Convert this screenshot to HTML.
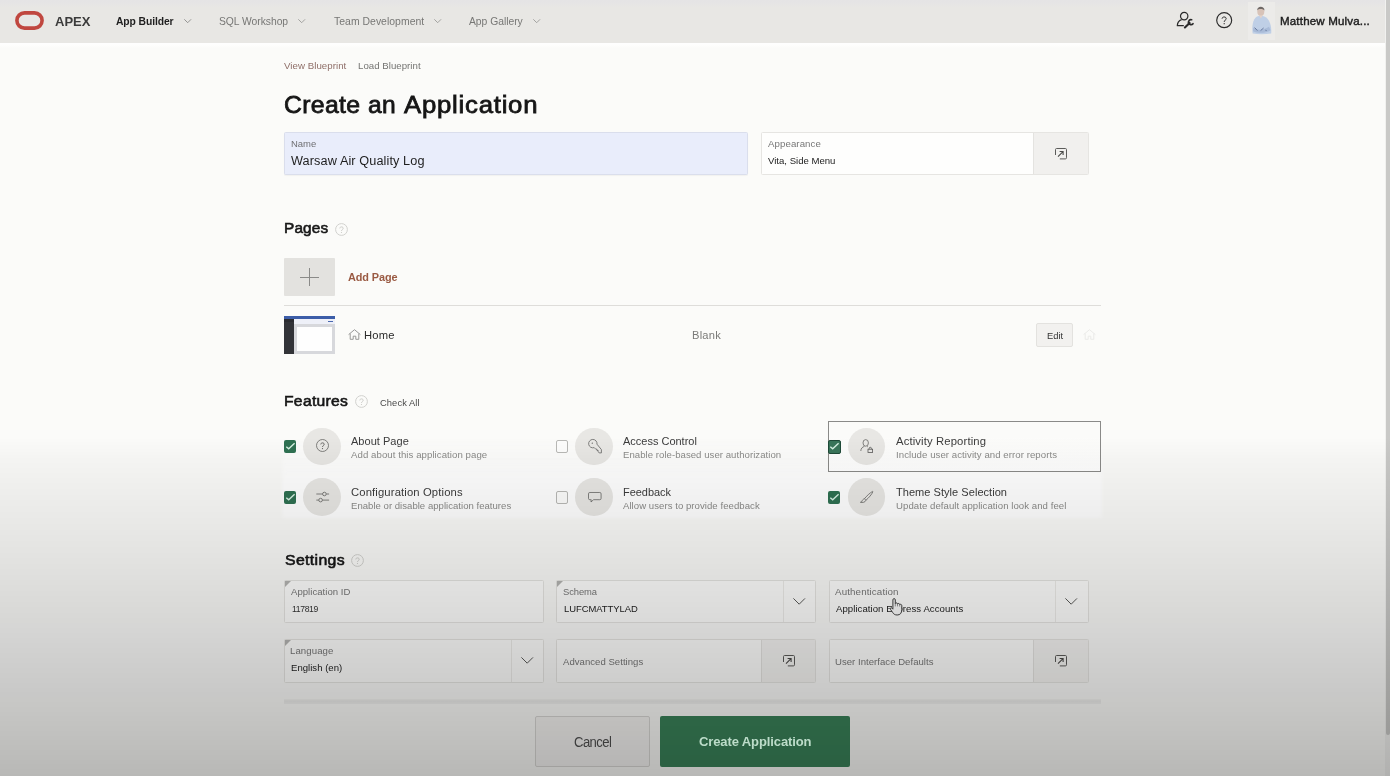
<!DOCTYPE html>
<html lang="en">
<head>
<meta charset="utf-8">
<title>Create an Application</title>
<style>
*{box-sizing:border-box;margin:0;padding:0}
html,body{width:1390px;height:776px;overflow:hidden;background:#fbfbf9;font-family:"Liberation Sans",Arial,sans-serif}
#root{position:relative;width:1390px;height:776px;overflow:hidden;background:#fbfbf9}
.a{position:absolute}
.t{position:absolute;white-space:pre;line-height:1;display:block;transform-origin:0 0}
#hdr{left:0;top:0;width:1390px;height:42.5px;background:#e8e7e4}
#hdrtop{left:0;top:0;width:1390px;height:7px;background:linear-gradient(#e5e4e5 0,#e6e5e5 55%,#e8e7e4 100%)}
#hdrbot{left:0;top:42.5px;width:1390px;height:5px;background:linear-gradient(#fefefe 0,#fefefd 40%,#fbfbf9 100%)}
.fld{background:#fefefd;border:1px solid #e6e5e2;border-radius:1.5px}
.btnpart{background:#f1f0ee;border-left:1px solid #e4e3e0}
.btnpart.lo{background:#f5f4f2}
.circ{width:37.6px;height:37.8px;border-radius:50%;background:#e8e7e4}
.cb{width:12.3px;height:12.6px;border-radius:2px}
.cb.on{background:#2f7152}
.cb.off{background:#fdfdfc;border:1px solid #b9b9b6}
.tri{width:0;height:0;border-top:6px solid #b4b4b2;border-right:6px solid transparent}
svg{position:absolute;overflow:visible}
#ov{left:0;top:0;width:1390px;height:776px;pointer-events:none;
background:linear-gradient(to bottom,rgba(0,0,0,0) 0px,rgba(0,0,0,0) 437px,rgba(0,0,0,0.027) 460px,rgba(0,0,0,0.044) 480px,rgba(0,0,0,0.092) 550px,rgba(0,0,0,0.1335) 610px,rgba(0,0,0,0.197) 690px,rgba(0,0,0,0.253) 762px,rgba(0,0,0,0.265) 776px)}
#halo{left:282px;top:437px;width:820px;height:81px;background:linear-gradient(to bottom,rgba(255,255,255,0) 0,rgba(255,255,255,1) 45px,rgba(255,255,255,1) 100%);filter:blur(2px)}
</style>
</head>
<body>
<div id="root">
<!-- header -->
<div class="a" id="hdr"></div>
<div class="a" id="hdrtop"></div>
<div class="a" id="hdrbot"></div>
<svg style="left:15px;top:11px" width="29" height="19" viewBox="0 0 29 19"><rect x="1.9" y="1.9" width="25.2" height="15.2" rx="7.6" fill="none" stroke="#c0473f" stroke-width="3.6"/></svg>
<!-- chevrons -->
<svg style="left:184.3px;top:19.2px" width="7.4" height="4.2" viewBox="0 0 7.4 4.2"><polyline points="0.3,0.3 3.7,3.7 7.1,0.3" fill="none" stroke="#8a8a88" stroke-width="0.9"/></svg>
<svg style="left:298.4px;top:19.2px" width="7.4" height="4.2" viewBox="0 0 7.4 4.2"><polyline points="0.3,0.3 3.7,3.7 7.1,0.3" fill="none" stroke="#9a9a98" stroke-width="0.9"/></svg>
<svg style="left:433.9px;top:19.2px" width="7.4" height="4.2" viewBox="0 0 7.4 4.2"><polyline points="0.3,0.3 3.7,3.7 7.1,0.3" fill="none" stroke="#9a9a98" stroke-width="0.9"/></svg>
<svg style="left:533px;top:19.2px" width="7.4" height="4.2" viewBox="0 0 7.4 4.2"><polyline points="0.3,0.3 3.7,3.7 7.1,0.3" fill="none" stroke="#9a9a98" stroke-width="0.9"/></svg>
<!-- admin icon -->
<svg style="left:1176px;top:11px" width="18" height="18" viewBox="0 0 18 18">
<circle cx="8.2" cy="5.1" r="3.7" fill="none" stroke="#2a2a2a" stroke-width="1.2"/>
<path d="M5.6 8.6 C2.8 9.6 1.4 12 1.3 14.7 H7.8" fill="none" stroke="#2a2a2a" stroke-width="1.2" stroke-linejoin="round"/>
<path d="M8.9 16.5 L13.6 11.9" fill="none" stroke="#2a2a2a" stroke-width="2.1" stroke-linecap="round"/>
<path d="M15.3 8.6 A2.5 2.5 0 1 0 17.2 12.3" fill="none" stroke="#2a2a2a" stroke-width="1.7" stroke-linecap="round" transform="rotate(8 14.6 11)"/>
</svg>
<!-- help icon -->
<svg style="left:1215.5px;top:11.8px" width="16.4" height="16.4" viewBox="0 0 16.4 16.4"><circle cx="8.2" cy="8.2" r="7.5" fill="none" stroke="#2c2c2c" stroke-width="1.15"/>
<path d="M6.1 6.7 C6.1 4.4 10.2 4.4 10.2 6.6 C10.2 8.2 8.2 8.1 8.2 9.9" fill="none" stroke="#2c2c2c" stroke-width="1.0"/><circle cx="8.2" cy="11.7" r="0.65" fill="#2c2c2c"/></svg>
<!-- avatar -->
<svg style="left:1248px;top:2px" width="27" height="38" viewBox="0 0 27 38">
<rect x="0" y="0" width="27" height="38" fill="#ecebe9"/>
<path d="M4.6 31.4 C3.8 25 4.6 17 9 14.6 L12.6 13.4 L16.4 14.4 C21.6 16.4 23.8 24 23.2 31.4 C17 32.4 10 32.4 4.6 31.4 Z" fill="#bfcfe6"/>
<path d="M5.2 25.4 C9 28.4 15 28.6 21 24.8 L22.6 28.2 C17 31.6 10 31.4 5 29.2 Z" fill="#a9bbd8"/>
<path d="M6.6 25.6 L9.4 28.6 M12.6 28.6 L15.6 26 M17.4 28.2 L18.6 28.6" stroke="#5f6f95" stroke-width="0.9" fill="none"/>
<ellipse cx="12.8" cy="9.6" rx="3.5" ry="4.4" fill="#d8c3b8"/>
<path d="M9.2 8.4 C9 3.6 16.6 3.6 16.5 8.6 C15.6 6.6 10.4 6.4 9.2 8.4Z" fill="#6f6966"/>
<path d="M11.2 13.6 L12.9 16.6 L14.6 13.6Z" fill="#e3d2c8"/>
</svg>
<!-- name field -->
<div class="a" style="left:284px;top:132px;width:463.5px;height:43px;background:#e9edfb;border:1px solid #dadeec;border-radius:1.5px;box-shadow:0 1px 1px rgba(0,0,0,0.04)"></div>
<!-- appearance field -->
<div class="a fld" style="left:761px;top:132px;width:327.5px;height:43px"></div>
<div class="a btnpart" style="left:1033px;top:133px;width:54.5px;height:41px"></div>
<svg class="pop" style="left:1055px;top:148px" width="12" height="11.4" viewBox="0 0 12 11.4"><path d="M0.5 7 V1.6 Q0.5 0.5 1.6 0.5 H10.4 Q11.5 0.5 11.5 1.6 V9.8 Q11.5 10.9 10.4 10.9 H4.8" fill="none" stroke="#5a5a58" stroke-width="1"/><path d="M3 8.6 L8 3.6 M4.6 3.5 H8.1 V7" fill="none" stroke="#4a4a48" stroke-width="1.1"/></svg>
<!-- pages -->
<svg style="left:334.8px;top:222.8px" width="13" height="13" viewBox="0 0 13 13"><circle cx="6.5" cy="6.5" r="5.9" fill="none" stroke="#d2d2cf" stroke-width="1"/><path d="M4.8 5.4 C4.8 3.4 8.2 3.4 8.2 5.3 C8.2 6.6 6.5 6.5 6.5 8" fill="none" stroke="#c8c8c5" stroke-width="0.9"/><circle cx="6.5" cy="9.5" r="0.6" fill="#c8c8c5"/></svg>
<div class="a" style="left:284px;top:258px;width:51px;height:38px;background:#e3e2df;border-radius:1px"></div>
<div class="a" style="left:300.4px;top:276.7px;width:18.6px;height:1px;background:#8a8a88"></div>
<div class="a" style="left:309.2px;top:267.9px;width:1px;height:18.6px;background:#8a8a88"></div>
<div class="a" style="left:284px;top:305px;width:816.5px;height:1px;background:#deddda"></div>
<!-- thumbnail -->
<div class="a" style="left:284px;top:316px;width:51px;height:37.5px;background:#d7d8dc"></div>
<div class="a" style="left:284px;top:316px;width:51px;height:2.5px;background:#3c5da8"></div>
<div class="a" style="left:284px;top:318.5px;width:10px;height:35px;background:#323338"></div>
<div class="a" style="left:284px;top:318.5px;width:10px;height:3.5px;background:#2a2b30"></div>
<div class="a" style="left:294px;top:318.5px;width:41px;height:5.5px;background:#eef0f8"></div>
<div class="a" style="left:328.4px;top:321.2px;width:4.6px;height:1.2px;background:#4a68b0"></div>
<div class="a" style="left:296.8px;top:326.8px;width:35.6px;height:24px;background:#fefefe"></div>
<!-- home icon -->
<svg style="left:347.6px;top:329px" width="13" height="11" viewBox="0 0 13 11"><path d="M0.6 5.6 L6.5 0.7 L12.4 5.6 M2.2 4.6 V10.3 H5.2 V7.2 H7.8 V10.3 H10.8 V4.6" fill="none" stroke="#8f8f8d" stroke-width="0.9" stroke-linejoin="round"/></svg>
<!-- edit button -->
<div class="a" style="left:1036.4px;top:323.2px;width:36.2px;height:23.5px;background:#f2f1ef;border:1px solid #e3e2df;border-radius:2px"></div>
<svg style="left:1082.5px;top:329px" width="13" height="11" viewBox="0 0 13 11"><path d="M0.6 5.6 L6.5 0.7 L12.4 5.6 M2.2 4.6 V10.3 H5.2 V7.2 H7.8 V10.3 H10.8 V4.6" fill="none" stroke="#e9e9e6" stroke-width="0.9" stroke-linejoin="round"/></svg>
<!-- features help -->
<svg style="left:354.9px;top:394.6px" width="13" height="13" viewBox="0 0 13 13"><circle cx="6.5" cy="6.5" r="5.9" fill="none" stroke="#d2d2cf" stroke-width="1"/><path d="M4.8 5.4 C4.8 3.4 8.2 3.4 8.2 5.3 C8.2 6.6 6.5 6.5 6.5 8" fill="none" stroke="#c8c8c5" stroke-width="0.9"/><circle cx="6.5" cy="9.5" r="0.6" fill="#c8c8c5"/></svg>
<div class="a" id="halo"></div>
<!-- focus box -->
<div class="a" style="left:828px;top:421px;width:273px;height:50.5px;border:1px solid #8a8a88;background:linear-gradient(#fbfbf9 0,#fbfbf9 30%,#ffffff 100%)"></div>
<!-- circles -->
<div class="a circ" style="left:303.2px;top:427.6px"></div>
<div class="a circ" style="left:575.4px;top:427.6px"></div>
<div class="a circ" style="left:847.7px;top:427.6px"></div>
<div class="a circ" style="left:303.2px;top:477.8px"></div>
<div class="a circ" style="left:575.4px;top:477.8px"></div>
<div class="a circ" style="left:847.7px;top:477.8px"></div>
<!-- checkboxes -->
<div class="a cb on" style="left:284.1px;top:440.2px"></div>
<div class="a cb off" style="left:556.2px;top:440.2px"></div>
<div class="a cb on" style="left:828px;top:439.7px;width:13px;height:14px;background:#39755a;border:1.2px solid #1f4a38"></div>
<div class="a cb on" style="left:284.1px;top:491.2px"></div>
<div class="a cb off" style="left:556.2px;top:491.2px"></div>
<div class="a cb on" style="left:828.2px;top:491.2px"></div>
<svg style="left:284.1px;top:440.2px" width="12.6" height="12.6" viewBox="0 0 12.6 12.6"><polyline points="2.3,6.7 4.7,8.8 10.6,3.3" fill="none" stroke="#d6f0e2" stroke-width="1.4"/></svg>
<svg style="left:828.2px;top:440.4px" width="12.6" height="12.6" viewBox="0 0 12.6 12.6"><polyline points="2.3,6.7 4.7,8.8 10.6,3.3" fill="none" stroke="#d6f0e2" stroke-width="1.4"/></svg>
<svg style="left:284.1px;top:491.2px" width="12.6" height="12.6" viewBox="0 0 12.6 12.6"><polyline points="2.3,6.7 4.7,8.8 10.6,3.3" fill="none" stroke="#d6f0e2" stroke-width="1.4"/></svg>
<svg style="left:828.2px;top:491.2px" width="12.6" height="12.6" viewBox="0 0 12.6 12.6"><polyline points="2.3,6.7 4.7,8.8 10.6,3.3" fill="none" stroke="#d6f0e2" stroke-width="1.4"/></svg>
<!-- feature icons -->
<svg style="left:315.9px;top:439.4px" width="13" height="13" viewBox="0 0 13 13"><circle cx="6.5" cy="6.5" r="6" fill="none" stroke="#636361" stroke-width="0.78"/><path d="M4.8 5.4 C4.8 3.4 8.2 3.4 8.2 5.3 C8.2 6.6 6.5 6.5 6.5 8" fill="none" stroke="#5b5b59" stroke-width="0.9"/><circle cx="6.5" cy="9.6" r="0.6" fill="#5b5b59"/></svg>
<svg style="left:587.5px;top:438.8px" width="14.4" height="14.6" viewBox="0 0 14.4 14.6"><path d="M9.0 5.2 A4.2 4.2 0 1 0 6.2 8.6 L7.8 10.2 H9 V11.5 H10.2 V12.8 L11.2 13.9 H13.4 V10.6 Z" fill="none" stroke="#666664" stroke-width="0.8" stroke-linejoin="round"/><circle cx="4.3" cy="4.2" r="0.65" fill="#666664"/></svg>
<svg style="left:859.5px;top:438.8px" width="15" height="15" viewBox="0 0 15 15"><ellipse cx="5.7" cy="3.9" rx="2.7" ry="3.3" fill="none" stroke="#636361" stroke-width="0.78"/><path d="M0.8 12 C0.9 9.4 2.4 8 4.4 7.4 M7 7.4 L7.8 7.8" fill="none" stroke="#636361" stroke-width="0.78"/><rect x="8" y="10.2" width="4.6" height="3.2" fill="none" stroke="#5b5b59" stroke-width="0.8"/><path d="M9.2 10.2 V9.4 A1.1 1.1 0 0 1 11.4 9.4 V10.2" fill="none" stroke="#5b5b59" stroke-width="0.8"/></svg>
<svg style="left:316px;top:491px" width="13.4" height="12" viewBox="0 0 13.4 12"><path d="M0.3 3 H6.6 M10.2 3 H13.1 M0.3 9.1 H2.8 M6.4 9.1 H13.1" fill="none" stroke="#636361" stroke-width="0.78"/><circle cx="8.4" cy="3" r="1.8" fill="none" stroke="#636361" stroke-width="0.78"/><circle cx="4.6" cy="9.1" r="1.8" fill="none" stroke="#636361" stroke-width="0.78"/></svg>
<svg style="left:587.8px;top:492px" width="13.6" height="10.6" viewBox="0 0 13.6 10.6"><path d="M1.8 0.5 H11.8 Q13.1 0.5 13.1 1.8 V6.4 Q13.1 7.7 11.8 7.7 H5.6 L3 10 L3.2 7.7 H1.8 Q0.5 7.7 0.5 6.4 V1.8 Q0.5 0.5 1.8 0.5 Z" fill="none" stroke="#636361" stroke-width="0.78" stroke-linejoin="round"/></svg>
<svg style="left:860px;top:491px" width="13.4" height="11.8" viewBox="0 0 13.4 11.8"><path d="M12.6 0.4 C10.2 1.6 6.2 5.4 4.4 7.8 L6 9.2 C8.4 7.2 12 3.2 12.9 0.7 Z M4.4 7.8 C3.2 8 2.4 9 2 10.2 C1.6 11 0.9 11.2 0.4 11.3 C2.6 11.8 5.2 11.4 6 9.2" fill="none" stroke="#636361" stroke-width="0.78" stroke-linejoin="round"/></svg>
<!-- settings help -->
<svg style="left:351.1px;top:553.9px" width="13" height="13" viewBox="0 0 13 13"><circle cx="6.5" cy="6.5" r="5.9" fill="none" stroke="#d2d2cf" stroke-width="1"/><path d="M4.8 5.4 C4.8 3.4 8.2 3.4 8.2 5.3 C8.2 6.6 6.5 6.5 6.5 8" fill="none" stroke="#c8c8c5" stroke-width="0.9"/><circle cx="6.5" cy="9.5" r="0.6" fill="#c8c8c5"/></svg>
<!-- settings fields row1 -->
<div class="a fld" style="left:284px;top:580px;width:260px;height:43px"></div>
<div class="a fld" style="left:556px;top:580px;width:260px;height:43px"></div>
<div class="a fld" style="left:829px;top:580px;width:260px;height:43px"></div>
<div class="a" style="left:782.5px;top:581px;width:1px;height:41px;background:#edece9"></div>
<div class="a" style="left:1055px;top:581px;width:1px;height:41px;background:#edece9"></div>
<div class="a tri" style="left:285px;top:581px"></div>
<div class="a tri" style="left:557px;top:581px"></div>
<svg style="left:793px;top:598px" width="12.4" height="7" viewBox="0 0 12.4 7"><polyline points="0.4,0.4 6.2,6.2 12,0.4" fill="none" stroke="#5a5a58" stroke-width="1"/></svg>
<svg style="left:1065px;top:598.3px" width="12.4" height="7" viewBox="0 0 12.4 7"><polyline points="0.4,0.4 6.2,6.2 12,0.4" fill="none" stroke="#5a5a58" stroke-width="1"/></svg>
<!-- row2 -->
<div class="a fld" style="left:284px;top:639px;width:260px;height:44px"></div>
<div class="a fld" style="left:556px;top:639px;width:260px;height:44px"></div>
<div class="a fld" style="left:829px;top:639px;width:260px;height:44px"></div>
<div class="a" style="left:511px;top:640px;width:1px;height:42px;background:#edece9"></div>
<div class="a btnpart lo" style="left:761px;top:640px;width:54px;height:42px"></div>
<div class="a btnpart lo" style="left:1033px;top:640px;width:55px;height:42px"></div>
<div class="a tri" style="left:285px;top:640px"></div>
<svg style="left:521px;top:657.3px" width="12.4" height="7" viewBox="0 0 12.4 7"><polyline points="0.4,0.4 6.2,6.2 12,0.4" fill="none" stroke="#5a5a58" stroke-width="1"/></svg>
<svg style="left:782.5px;top:654.6px" width="12" height="11.4" viewBox="0 0 12 11.4"><path d="M0.5 7 V1.6 Q0.5 0.5 1.6 0.5 H10.4 Q11.5 0.5 11.5 1.6 V9.8 Q11.5 10.9 10.4 10.9 H4.8" fill="none" stroke="#5a5a58" stroke-width="1"/><path d="M3 8.6 L8 3.6 M4.6 3.5 H8.1 V7" fill="none" stroke="#4a4a48" stroke-width="1.1"/></svg>
<svg style="left:1054.7px;top:654.9px" width="12" height="11.4" viewBox="0 0 12 11.4"><path d="M0.5 7 V1.6 Q0.5 0.5 1.6 0.5 H10.4 Q11.5 0.5 11.5 1.6 V9.8 Q11.5 10.9 10.4 10.9 H4.8" fill="none" stroke="#5a5a58" stroke-width="1"/><path d="M3 8.6 L8 3.6 M4.6 3.5 H8.1 V7" fill="none" stroke="#4a4a48" stroke-width="1.1"/></svg>
<!-- footer -->
<div class="a" style="left:284px;top:699px;width:816.5px;height:5px;background:linear-gradient(rgba(0,0,0,0.02),rgba(0,0,0,0.06) 40%,rgba(0,0,0,0.03))"></div>
<div class="a" style="left:535px;top:716.3px;width:115.4px;height:50.4px;background:#f6f5f3;border:1px solid #d9d8d5;border-radius:2px"></div>
<div class="a" style="left:660.2px;top:716px;width:189.8px;height:51px;background:#3a8259;border-radius:2px"></div>
<div class="a" id="txt" style="left:0;top:0;width:1390px;height:776px;will-change:transform">
<span class="t" style="left:54.6px;top:14.8px;font-size:13px;font-weight:700;color:#3b3b3b;transform:scaleX(0.9999);letter-spacing:-0.001px;">APEX</span>
<span class="t" style="left:115.7px;top:16.4px;font-size:10.5px;font-weight:700;color:#1f1f1f;transform:scaleX(0.9840);letter-spacing:-0.097px;">App Builder</span>
<span class="t" style="left:218.9px;top:16.5px;font-size:10.4px;font-weight:400;color:#777775;transform:scaleX(0.9943);letter-spacing:-0.036px;">SQL Workshop</span>
<span class="t" style="left:333.5px;top:16.5px;font-size:10.4px;font-weight:400;color:#777775;transform:scaleX(1.0037);letter-spacing:0.022px;">Team Development</span>
<span class="t" style="left:469.0px;top:16.5px;font-size:10.4px;font-weight:400;color:#777775;transform:scaleX(0.9954);letter-spacing:-0.025px;">App Gallery</span>
<span class="t" style="left:1279.5px;top:15.7px;font-size:11.2px;font-weight:400;color:#1c1c1c;transform:scaleX(1.0310);letter-spacing:0.169px;-webkit-text-stroke:0.4px #1c1c1c;">Matthew Mulva...</span>
<span class="t" style="left:284.1px;top:60.8px;font-size:9.6px;font-weight:400;color:#8f6f69;transform:scaleX(1.0094);letter-spacing:0.044px;">View Blueprint</span>
<span class="t" style="left:357.7px;top:60.8px;font-size:9.6px;font-weight:400;color:#747472;transform:scaleX(1.0059);letter-spacing:0.028px;">Load Blueprint</span>
<span class="t" style="left:284.1px;top:92.7px;font-size:24.2px;font-weight:400;color:#161616;transform:scaleX(1.0233);letter-spacing:0.331px;-webkit-text-stroke:0.8px #161616;">Create </span>
<span class="t" style="left:367.8px;top:92.7px;font-size:24.2px;font-weight:400;color:#161616;transform:scaleX(1.0166);letter-spacing:0.440px;-webkit-text-stroke:0.8px #161616;">an </span>
<span class="t" style="left:404.4px;top:92.7px;font-size:24.2px;font-weight:400;color:#161616;transform:scaleX(1.0641);letter-spacing:0.713px;-webkit-text-stroke:0.8px #161616;">Application</span>
<span class="t" style="left:290.6px;top:138.7px;font-size:9.5px;font-weight:400;color:#6f6f72;transform:scaleX(0.9972);letter-spacing:-0.024px;">Name</span>
<span class="t" style="left:291.4px;top:154.7px;font-size:12.5px;font-weight:400;color:#1e1e1e;transform:scaleX(1.0156);letter-spacing:0.095px;">Warsaw Air Quality Log</span>
<span class="t" style="left:767.7px;top:138.9px;font-size:9.5px;font-weight:400;color:#777;transform:scaleX(1.0153);letter-spacing:0.086px;">Appearance</span>
<span class="t" style="left:767.9px;top:156.0px;font-size:9.6px;font-weight:400;color:#222;transform:scaleX(0.9988);letter-spacing:-0.006px;">Vita, Side Menu</span>
<span class="t" style="left:284.0px;top:220.0px;font-size:15.2px;font-weight:400;color:#161616;transform:scaleX(1.0119);letter-spacing:0.126px;-webkit-text-stroke:0.6px #161616;">Pages</span>
<span class="t" style="left:348.4px;top:271.6px;font-size:11px;font-weight:700;color:#9a5a43;transform:scaleX(0.9888);letter-spacing:-0.082px;">Add Page</span>
<span class="t" style="left:363.6px;top:329.9px;font-size:11px;font-weight:400;color:#2a2a2a;transform:scaleX(1.0197);letter-spacing:0.189px;">Home</span>
<span class="t" style="left:691.6px;top:329.7px;font-size:10.8px;font-weight:400;color:#7a7a78;transform:scaleX(1.0312);letter-spacing:0.204px;">Blank</span>
<span class="t" style="left:1046.6px;top:331.1px;font-size:9.4px;font-weight:400;color:#333;transform:scaleX(0.9983);letter-spacing:-0.009px;">Edit</span>
<span class="t" style="left:284.0px;top:393.0px;font-size:15.2px;font-weight:400;color:#161616;transform:scaleX(1.0331);letter-spacing:0.274px;-webkit-text-stroke:0.6px #161616;">Features</span>
<span class="t" style="left:380.2px;top:398.8px;font-size:9.2px;font-weight:400;color:#4a4a4a;transform:scaleX(1.0168);letter-spacing:0.079px;">Check All</span>
<span class="t" style="left:351.4px;top:435.8px;font-size:11px;font-weight:400;color:#3c3c3c;transform:scaleX(1.0026);letter-spacing:0.017px;">About Page</span>
<span class="t" style="left:351.4px;top:450.3px;font-size:9.5px;font-weight:400;color:#8b8b89;transform:scaleX(1.0137);letter-spacing:0.060px;">Add about this application page</span>
<span class="t" style="left:351.4px;top:486.6px;font-size:11px;font-weight:400;color:#3c3c3c;transform:scaleX(1.0244);letter-spacing:0.127px;">Configuration Options</span>
<span class="t" style="left:351.4px;top:501.1px;font-size:9.5px;font-weight:400;color:#8b8b89;transform:scaleX(1.0055);letter-spacing:0.023px;">Enable or disable application features</span>
<span class="t" style="left:623.0px;top:435.8px;font-size:11px;font-weight:400;color:#3c3c3c;transform:scaleX(0.9994);letter-spacing:-0.003px;">Access Control</span>
<span class="t" style="left:623.0px;top:450.3px;font-size:9.5px;font-weight:400;color:#8b8b89;transform:scaleX(1.0091);letter-spacing:0.040px;">Enable role-based user authorization</span>
<span class="t" style="left:622.8px;top:486.6px;font-size:11px;font-weight:400;color:#3c3c3c;transform:scaleX(0.9968);letter-spacing:-0.022px;">Feedback</span>
<span class="t" style="left:622.8px;top:501.1px;font-size:9.5px;font-weight:400;color:#8b8b89;transform:scaleX(1.0095);letter-spacing:0.042px;">Allow users to provide feedback</span>
<span class="t" style="left:896.0px;top:435.8px;font-size:11px;font-weight:400;color:#3c3c3c;transform:scaleX(1.0257);letter-spacing:0.126px;">Activity Reporting</span>
<span class="t" style="left:896.0px;top:450.3px;font-size:9.5px;font-weight:400;color:#8b8b89;transform:scaleX(1.0133);letter-spacing:0.054px;">Include user activity and error reports</span>
<span class="t" style="left:896.0px;top:486.6px;font-size:11px;font-weight:400;color:#3c3c3c;transform:scaleX(1.0043);letter-spacing:0.023px;">Theme Style Selection</span>
<span class="t" style="left:896.0px;top:501.1px;font-size:9.5px;font-weight:400;color:#8b8b89;transform:scaleX(1.0121);letter-spacing:0.051px;">Update default application look and feel</span>
<span class="t" style="left:284.5px;top:552.1px;font-size:15.2px;font-weight:400;color:#161616;transform:scaleX(1.0438);letter-spacing:0.329px;-webkit-text-stroke:0.6px #161616;">Settings</span>
<span class="t" style="left:290.9px;top:587.3px;font-size:9.5px;font-weight:400;color:#777;transform:scaleX(1.0066);letter-spacing:0.030px;">Application ID</span>
<span class="t" style="left:291.7px;top:605.2px;font-size:9.2px;font-weight:400;color:#333;transform:scaleX(0.9386);letter-spacing:-0.393px;">117819</span>
<span class="t" style="left:562.9px;top:587.3px;font-size:9.5px;font-weight:400;color:#777;transform:scaleX(0.9891);letter-spacing:-0.077px;">Schema</span>
<span class="t" style="left:563.7px;top:604.2px;font-size:9.5px;font-weight:400;color:#222;transform:scaleX(0.9928);letter-spacing:-0.050px;">LUFCMATTYLAD</span>
<span class="t" style="left:835.4px;top:587.3px;font-size:9.5px;font-weight:400;color:#777;transform:scaleX(1.0272);letter-spacing:0.123px;">Authentication</span>
<span class="t" style="left:835.9px;top:604.2px;font-size:9.5px;font-weight:400;color:#222;transform:scaleX(1.0103);letter-spacing:0.047px;">Application Express Accounts</span>
<span class="t" style="left:289.6px;top:646.3px;font-size:9.5px;font-weight:400;color:#777;transform:scaleX(1.0132);letter-spacing:0.079px;">Language</span>
<span class="t" style="left:290.8px;top:663.0px;font-size:9.5px;font-weight:400;color:#222;transform:scaleX(1.0049);letter-spacing:0.022px;">English (en)</span>
<span class="t" style="left:562.9px;top:656.6px;font-size:9.5px;font-weight:400;color:#777;transform:scaleX(1.0061);letter-spacing:0.030px;">Advanced Settings</span>
<span class="t" style="left:835.0px;top:656.6px;font-size:9.5px;font-weight:400;color:#777;transform:scaleX(1.0069);letter-spacing:0.030px;">User Interface Defaults</span>
<span class="t" style="left:574.3px;top:735.1px;font-size:14px;font-weight:400;color:#505050;transform:scaleX(0.9347);letter-spacing:-0.609px;">Cancel</span>
</div>
<!-- cursor -->
<svg style="left:889.5px;top:597.7px" width="13" height="18" viewBox="0 0 13 18"><path d="M2.9 10.2 V1.8 C2.9 0.2 5.3 0.2 5.3 1.8 V5.6 C5.7 4.5 7.4 4.7 7.5 5.9 C8 5.1 9.7 5.4 9.7 6.6 C10.3 6 11.8 6.3 11.8 7.6 V11.6 C11.8 15 10.2 17 7.2 17 C4.8 17 3.6 16 2.6 14.4 L0.5 11.4 C-0.3 10 1.3 9.2 2.1 10.2 L2.9 11.2 Z" fill="#fbfbfb" stroke="#2a2a2a" stroke-width="0.9" stroke-linejoin="round"/><path d="M5.3 5.6 V8.4 M7.5 6 V8.4 M9.7 6.8 V8.6" stroke="#555" stroke-width="0.6" fill="none"/></svg>
<!-- scrollbar -->
<div class="a" style="left:1385px;top:0;width:5px;height:776px;background:#f1f1ef"></div>
<div class="a" style="left:1386px;top:0;width:4px;height:735px;background:#c9c9c7;border-radius:0 0 2px 2px"></div>
<div class="a" id="ov"></div>
<div class="a" id="txt2" style="left:0;top:0;width:1390px;height:776px;will-change:transform">
<span class="t" style="left:698.9px;top:735.1px;font-size:13.3px;font-weight:700;color:#bcdcc9;transform:scaleX(0.9808);letter-spacing:-0.134px;">Create Application</span>
</div>
</div>
</body>
</html>
